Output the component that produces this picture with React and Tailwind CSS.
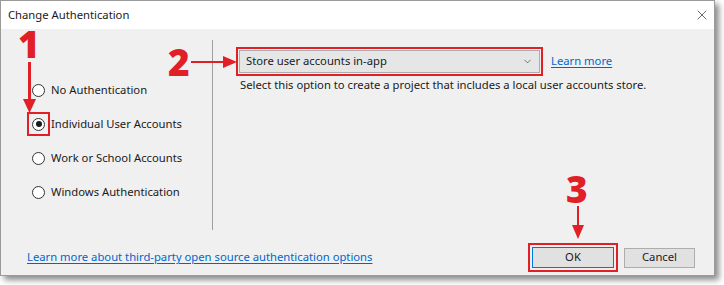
import { X, ChevronDown } from 'lucide-react'

const options = [
  { label: 'No Authentication' },
  { label: 'Individual User Accounts', checked: true, marked: true },
  { label: 'Work or School Accounts' },
  { label: 'Windows Authentication' },
]

function Radio({ checked }) {
  return (
    <span className="w-[13px] h-[13px] rounded-full border border-[#333] bg-white flex items-center justify-center shrink-0">
      {checked && <span className="w-[6px] h-[6px] rounded-full bg-[#1a1a1a]" />}
    </span>
  )
}

function Num({ children, className }) {
  return (
    <span
      className={`absolute text-[37px] leading-none font-black text-[#e11f27] ${className}`}
      style={{ fontFamily: '"Noto Sans", Arial, sans-serif' }}
    >
      {children}
    </span>
  )
}

export default function App() {
  return (
    <div
      className="w-[724px] h-[285px] bg-white relative text-[11.25px] text-[#1a1a1a]"
      style={{ fontFamily: '"Noto Sans", "Open Sans", sans-serif' }}
    >
      <div className="w-[715px] h-[276px] flex flex-col border border-[#9a9a9a] shadow-[4px_4px_6px_rgba(0,0,0,0.45)]">
        {/* title bar */}
        <div className="h-[28px] bg-white flex items-center justify-between pl-[7px] pr-[4px]">
          <span>Change Authentication</span>
          <X size={16} strokeWidth={1} className="text-[#222]" />
        </div>

        {/* body */}
        <div className="flex-1 bg-[#f0f0f0] flex flex-col relative">
          <div className="flex pt-[11px] h-[201px]">
            {/* left options */}
            <div className="w-[211px] flex flex-col gap-[14px] pt-[40px] pl-[31px]">
              {options.map(o => (
                <div key={o.label} className="h-[20px] flex items-center gap-[6px] relative">
                  {o.marked && (
                    <span className="absolute left-[-5px] top-[-2px] w-[23px] h-[24px] border-2 border-[#e11f27]" />
                  )}
                  <Radio checked={o.checked} />
                  <span>{o.label}</span>
                </div>
              ))}
            </div>

            <div className="w-px h-[190px] bg-[#a0a0a0]" />

            {/* right side */}
            <div className="flex-1 pl-[23px] pt-[7px]">
              <div className="flex items-center gap-[8px]">
                <div className="w-[307px] h-[29px] border-2 border-[#e11f27] p-px">
                  <div className="h-full bg-[#e6e6e6] border border-[#adadad] flex items-center justify-between pl-[6px] pr-[6px]">
                    <span>Store user accounts in-app</span>
                    <ChevronDown size={11} strokeWidth={1.5} className="text-[#444]" />
                  </div>
                </div>
                <a className="text-[#0066cc] underline underline-offset-2">Learn more</a>
              </div>
              <p className="mt-[1px] pl-[4px]">Select this option to create a project that includes a local user accounts store.</p>
            </div>
          </div>

          {/* bottom row */}
          <div className="flex items-center justify-between pl-[26px] pr-[19px] mt-[13px]">
            <a className="text-[#0066cc] underline underline-offset-2">Learn more about third-party open source authentication options</a>
            <div className="flex items-center gap-[6px]">
              <div className="border-2 border-[#e11f27] p-[2px]">
                <button className="w-[82px] h-[21px] bg-[#e1e1e1] border border-[#0078d7] flex items-center justify-center">OK</button>
              </div>
              <button className="w-[71px] h-[20px] bg-[#e1e1e1] border border-[#adadad] flex items-center justify-center">Cancel</button>
            </div>
          </div>

          {/* annotations */}
          <Num className="left-[17px] top-[-4px]">1</Num>
          <div className="absolute left-[27px] top-[33px] w-[3px] h-[38px] bg-[#e11f27]" />
          <svg className="absolute left-[22px] top-[70px]" width="13" height="14" viewBox="0 0 13 14">
            <polygon points="0,0 13,0 6.5,14" fill="#e11f27" />
          </svg>

          <Num className="left-[167px] top-[14px]">2</Num>
          <div className="absolute left-[190px] top-[32px] w-[33px] h-[2px] bg-[#e11f27]" />
          <svg className="absolute left-[222px] top-[27px]" width="14" height="12" viewBox="0 0 14 12">
            <polygon points="0,0 14,6 0,12" fill="#e11f27" />
          </svg>

          <Num className="left-[565px] top-[141px]">3</Num>
          <div className="absolute left-[576px] top-[177px] w-[2px] h-[20px] bg-[#e11f27]" />
          <svg className="absolute left-[571px] top-[196px]" width="12" height="14" viewBox="0 0 12 14">
            <polygon points="0,0 12,0 6,14" fill="#e11f27" />
          </svg>
        </div>
      </div>
    </div>
  )
}
